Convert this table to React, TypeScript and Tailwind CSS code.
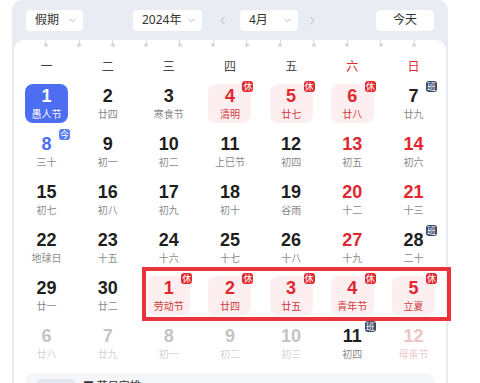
import { ChevronDown, ChevronLeft, ChevronRight } from "lucide-react";

type Tone = "normal" | "weekend" | "holiday" | "selected" | "today" | "faded" | "fadedRed";
type Badge = "休" | "班" | "今" | null;

interface Day {
  d: number;
  lunar: string;
  tone?: Tone;
  badge?: Badge;
}

const weeks: Day[][] = [
  [
    { d: 1, lunar: "愚人节", tone: "selected" },
    { d: 2, lunar: "廿四" },
    { d: 3, lunar: "寒食节" },
    { d: 4, lunar: "清明", tone: "holiday", badge: "休" },
    { d: 5, lunar: "廿七", tone: "holiday", badge: "休" },
    { d: 6, lunar: "廿八", tone: "holiday", badge: "休" },
    { d: 7, lunar: "廿九", badge: "班" },
  ],
  [
    { d: 8, lunar: "三十", tone: "today", badge: "今" },
    { d: 9, lunar: "初一" },
    { d: 10, lunar: "初二" },
    { d: 11, lunar: "上巳节" },
    { d: 12, lunar: "初四" },
    { d: 13, lunar: "初五", tone: "weekend" },
    { d: 14, lunar: "初六", tone: "weekend" },
  ],
  [
    { d: 15, lunar: "初七" },
    { d: 16, lunar: "初八" },
    { d: 17, lunar: "初九" },
    { d: 18, lunar: "初十" },
    { d: 19, lunar: "谷雨" },
    { d: 20, lunar: "十二", tone: "weekend" },
    { d: 21, lunar: "十三", tone: "weekend" },
  ],
  [
    { d: 22, lunar: "地球日" },
    { d: 23, lunar: "十五" },
    { d: 24, lunar: "十六" },
    { d: 25, lunar: "十七" },
    { d: 26, lunar: "十八" },
    { d: 27, lunar: "十九", tone: "weekend" },
    { d: 28, lunar: "二十", badge: "班" },
  ],
  [
    { d: 29, lunar: "廿一" },
    { d: 30, lunar: "廿二" },
    { d: 1, lunar: "劳动节", tone: "holiday", badge: "休" },
    { d: 2, lunar: "廿四", tone: "holiday", badge: "休" },
    { d: 3, lunar: "廿五", tone: "holiday", badge: "休" },
    { d: 4, lunar: "青年节", tone: "holiday", badge: "休" },
    { d: 5, lunar: "立夏", tone: "holiday", badge: "休" },
  ],
  [
    { d: 6, lunar: "廿八", tone: "faded" },
    { d: 7, lunar: "廿九", tone: "faded" },
    { d: 8, lunar: "初一", tone: "faded" },
    { d: 9, lunar: "初二", tone: "faded" },
    { d: 10, lunar: "初三", tone: "faded" },
    { d: 11, lunar: "初四", badge: "班" },
    { d: 12, lunar: "母亲节", tone: "fadedRed" },
  ],
];

const boxStyle: Record<Tone, string> = {
  normal: "",
  weekend: "",
  holiday: "bg-[#fdefef]",
  selected: "bg-[#4e6ef2]",
  today: "",
  faded: "",
  fadedRed: "",
};

const numStyle: Record<Tone, string> = {
  normal: "text-[#1f1f1f]",
  weekend: "text-[#e0282e]",
  holiday: "text-[#e0282e]",
  selected: "text-white",
  today: "text-[#4e6ef2]",
  faded: "text-[#c4c4c4]",
  fadedRed: "text-[#efc4c4]",
};

const lunarStyle: Record<Tone, string> = {
  normal: "text-[#8a8a8a]",
  weekend: "text-[#8a8a8a]",
  holiday: "text-[#d0383c]",
  selected: "text-white",
  today: "text-[#8a8a8a]",
  faded: "text-[#d4d4d4]",
  fadedRed: "text-[#efcaca]",
};

const badgeStyle: Record<string, string> = {
  休: "bg-[#e0282e]",
  班: "bg-[#3c4868]",
  今: "bg-[#5b7cf5]",
};

function Select({ label, width }: { label: string; width: string }) {
  return (
    <div className={`${width} h-[21px] bg-white rounded-[4px] flex items-center justify-between pl-[9px] pr-[5px] text-[12px] text-[#333]`}>
      <span>{label}</span>
      <ChevronDown className="w-[11px] h-[11px] text-[#999]" strokeWidth={1.5} />
    </div>
  );
}

function Cell({ day }: { day: Day }) {
  const tone = day.tone ?? "normal";
  return (
    <div className="h-[48px] flex items-center justify-center">
      <div className={`relative w-[43px] h-[39px] rounded-[8px] flex flex-col items-center justify-center ${boxStyle[tone]}`}>
        <span
          className={`text-[18px] leading-[20px] font-bold ${numStyle[tone]}`}
          style={{ fontFamily: '"Liberation Sans", Arial, sans-serif' }}
        >
          {day.d}
        </span>
        <span className={`text-[10px] leading-[12px] mt-[2px] ${lunarStyle[tone]}`}>{day.lunar}</span>
        {day.badge && (
          <span
            className={`absolute -top-[3px] -right-[2px] w-[11px] h-[11px] rounded-[3px] flex items-center justify-center text-white text-[9px] leading-none ${badgeStyle[day.badge]}`}
          >
            {day.badge}
          </span>
        )}
      </div>
    </div>
  );
}

export default function App() {
  const weekdays = ["一", "二", "三", "四", "五", "六", "日"];

  return (
    <div
      className="relative w-[480px] h-[383px] overflow-hidden bg-white"
      style={{ fontFamily: '"Noto Sans", "Noto Sans CJK SC", sans-serif' }}
    >
      <div className="ml-[12px] w-[436px] bg-[#e9ecf3] rounded-t-[10px] px-[2px]">
        {/* header controls */}
        <div className="h-[40px] flex items-center px-[12px]">
          <Select label="假期" width="w-[57px]" />
          <div className="w-[50px]" />
          <Select label="2024年" width="w-[69px]" />
          <ChevronLeft className="w-[13px] h-[13px] text-[#aaa] ml-[14px]" strokeWidth={1.5} />
          <div className="w-[11px]" />
          <Select label="4月" width="w-[58px]" />
          <ChevronRight className="w-[13px] h-[13px] text-[#aaa] ml-[8px]" strokeWidth={1.5} />
          <div className="flex-1" />
          <div className="w-[58px] h-[21px] bg-white rounded-[5px] flex items-center justify-center text-[12px] text-[#333]">
            今天
          </div>
        </div>

        {/* calendar body */}
        <div className="bg-white rounded-t-[10px] pb-[40px]">
          <div className="h-[14px] flex pl-[15px]">
            {Array.from({ length: 12 }).map((_, i) => (
              <div key={i} className="w-[33.5px] flex flex-col items-center">
                <div className="w-[1px] h-[4px] bg-[#d6dae2]" />
                <div className="w-[4px] h-[4px] rounded-full bg-[#d6dae2] -mt-[1px]" />
              </div>
            ))}
          </div>

          <div className="px-[2px]">
            <div className="grid grid-cols-7 h-[25px] items-center">
              {weekdays.map((w, i) => (
                <div key={w} className={`text-center text-[12px] ${i >= 5 ? "text-[#e0282e]" : "text-[#444]"}`}>
                  {w}
                </div>
              ))}
            </div>

            {weeks.map((week, wi) => (
              <div key={wi} className="grid grid-cols-7">
                {week.map((day, di) => (
                  <Cell key={di} day={day} />
                ))}
              </div>
            ))}
          </div>

          {/* legend bar */}
          <div className="mt-[6px] ml-[12px] mr-[11px] h-[40px] bg-[#f5f6f9] rounded-[8px] flex items-start pt-[6px] pl-[11px] gap-[8px]">
            <div className="w-[38px] h-[18px] bg-[#e3e7ef] rounded-[4px]" />
            <span className="text-[11px] leading-[14px] text-[#333]">■ 节日安排</span>
          </div>
        </div>
      </div>

      {/* annotation frame */}
      <div className="absolute left-[142px] top-[267px] w-[309px] h-[54px] border-[4px] border-[#e8343a]" />
    </div>
  );
}
